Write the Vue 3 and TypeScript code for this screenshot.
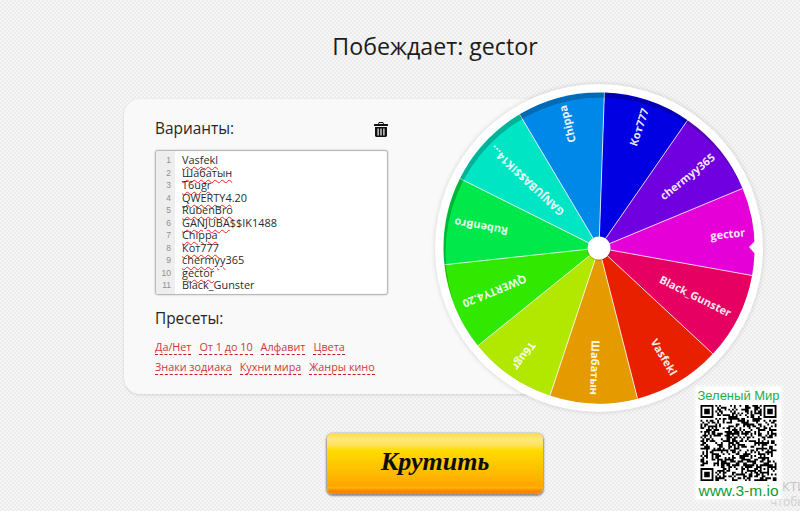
<script setup lang="ts">
const cx = 170
const cy = 170
const R = 155.5
const names = ['Кот777','chermyy365','gector','Black_Gunster','Vasfekl','Шабатын','T6ugr','QWERTY4.20','RubenBro','GANJUBA$$IK14...','Chippa']
const colors = ['#0000e2','#7000e0','#e600d8','#e60062','#e82000','#e59a00','#b2e800','#30e800','#00e84a','#00e5c4','#0088e8']
const step = 360 / 11
const start = 2
function pt(a: number, r: number) {
  const t = (a - 90) * Math.PI / 180
  return [cx + r * Math.cos(t), cy + r * Math.sin(t)]
}
const segments = names.map((name, i) => {
  const a0 = start + i * step
  const a1 = a0 + step
  const p0 = pt(a0, R)
  const p1 = pt(a1, R)
  return {
    name,
    color: colors[i],
    d: `M${cx} ${cy}L${p0[0].toFixed(2)} ${p0[1].toFixed(2)}A${R} ${R} 0 0 1 ${p1[0].toFixed(2)} ${p1[1].toFixed(2)}Z`,
    line: p0,
    rot: `rotate(${(a0 + step / 2 - 90).toFixed(2)} ${cx} ${cy})`
  }
})
const lines = ['Vasfekl','Шабатын','T6ugr','QWERTY4.20','RubenBro','GANJUBA$$IK1488','Chippa','Кот777','chermyy365','gector','Black_Gunster']
const marks: Record<string, [string, string]> = {
  'QWERTY4.20': ['QWERTY4', '.20'],
  'GANJUBA$$IK1488': ['GANJUBA', '$$IK1488'],
  'Кот777': ['Кот777', ''],
  'chermyy365': ['chermyy', '365'],
  'Black_Gunster': ['', 'Black_Gunster']
}
const rows = lines.map((t) => {
  const m = marks[t]
  return m ? { wavy: m[0], plain: m[1] } : { wavy: t, plain: '' }
})
const presets = [['Да/Нет','От 1 до 10','Алфавит','Цвета'],['Знаки зодиака','Кухни мира','Жанры кино']]

const N = 41
function qrPath() {
  let seed = 20231
  const rnd = () => { seed = (seed * 1103515245 + 12345) & 0x7fffffff; return (seed >> 16) & 1 }
  const g: number[][] = []
  for (let y = 0; y < N; y++) { g.push([]); for (let x = 0; x < N; x++) g[y].push(rnd()) }
  const finder = (ox: number, oy: number, size: number) => {
    for (let y = -1; y <= size; y++) for (let x = -1; x <= size; x++) {
      if (oy + y < 0 || ox + x < 0 || oy + y >= N || ox + x >= N) continue
      const inside = x >= 0 && y >= 0 && x < size && y < size
      const ring = x === 0 || y === 0 || x === size - 1 || y === size - 1
      const core = x >= 2 && y >= 2 && x < size - 2 && y < size - 2
      g[oy + y][ox + x] = inside && (ring || core) ? 1 : 0
    }
  }
  finder(0, 0, 7); finder(N - 7, 0, 7); finder(0, N - 7, 7)
  for (let y = 0; y < 5; y++) for (let x = 0; x < 5; x++) {
    g[N - 9 + y][N - 9 + x] = (x === 0 || y === 0 || x === 4 || y === 4 || (x === 2 && y === 2)) ? 1 : 0
  }
  let d = ''
  g.forEach((r, y) => r.forEach((v, x) => { if (v) d += `M${x} ${y}h1v1h-1z` }))
  return d
}
const qr = qrPath()
</script>

<template>
  <div class="page">
    <div class="column">
      <h1 class="title">Побеждает: gector</h1>
      <section class="card">
        <div class="head">
          <h2 class="label">Варианты:</h2>
          <svg class="trash" viewBox="0 0 14 15" width="14" height="15" aria-hidden="true">
            <path fill="#111" fill-rule="evenodd" d="M5 0h4l1 2h3.400a.6.6 0 0 1 .6.6V4H0V2.600A.6.6 0 0 1 .6 2H4zM5.400 1 5 2h4l-.4-1zM1 5h12v8.600c0 .8-.6 1.400-1.400 1.400H2.400C1.600 15 1 14.400 1 13.600zM3.500 6.500v7h1.200v-7zM6.400 6.500v7h1.200v-7zM9.300 6.500v7h1.200v-7z"/>
          </svg>
        </div>
        <div class="editor">
          <div class="gutter">
            <div v-for="(r, i) in rows" :key="i" class="num">{{ i + 1 }}</div>
          </div>
          <div class="code">
            <div v-for="(r, i) in rows" :key="i" class="line"><span class="wavy">{{ r.wavy }}</span>{{ r.plain }}</div>
          </div>
        </div>
        <h2 class="label presets-label">Пресеты:</h2>
        <div v-for="(row, i) in presets" :key="i" class="preset-row">
          <a v-for="p in row" :key="p" class="preset">{{ p }}</a>
        </div>
      </section>
      <button class="spin">Крутить</button>
    </div>

    <svg class="wheel" width="340" height="340" viewBox="0 0 340 340">
      <defs>
        <clipPath id="disc"><circle :cx="cx" :cy="cy" :r="R" /></clipPath>
        <filter id="soft" x="-10%" y="-10%" width="120%" height="120%"><feGaussianBlur stdDeviation="2" /></filter>
      </defs>
      <circle :cx="cx" :cy="cy" r="165" fill="#000" opacity="0.1" filter="url(#soft)" />
      <circle :cx="cx" :cy="cy" r="164" fill="#fff" />
      <path v-for="s in segments" :key="s.name" :d="s.d" :fill="s.color" />
      <g stroke="#fff" stroke-opacity="0.75" stroke-width="1">
        <line v-for="s in segments" :key="s.name" :x1="cx" :y1="cy" :x2="s.line[0]" :y2="s.line[1]" />
      </g>
      <g clip-path="url(#disc)">
        <path fill="#000" fill-opacity="0.22" fill-rule="evenodd" :d="`M${cx - R} ${cy}a${R} ${R} 0 1 0 ${2 * R} 0a${R} ${R} 0 1 0 ${-2 * R} 0ZM${cx - R + 2} ${cy + 5}a${R} ${R} 0 1 0 ${2 * R} 0a${R} ${R} 0 1 0 ${-2 * R} 0Z`" />
      </g>
      <text v-for="s in segments" :key="s.name" class="slice-text" :x="cx + 147" :y="cy + 4" text-anchor="end" :transform="s.rot">{{ s.name }}</text>
      <circle :cx="cx" :cy="cy + 0.5" r="12" fill="#000" opacity="0.25" />
      <circle :cx="cx" :cy="cy" r="11.5" fill="#fff" />
      <path fill="#fff" d="M320 169 326 163V176Z" />
    </svg>

    <div class="behind">
      <div class="behind-a">КТИ</div>
      <div class="behind-b">чтобы</div>
    </div>
    <aside class="ad">
      <div class="ad-top">Зеленый Мир</div>
      <svg class="qr" :viewBox="`0 0 ${N} ${N}`" width="77" height="76"><path :d="qr" fill="#000" /></svg>
      <div class="ad-bottom">www.3-m.io</div>
    </aside>
  </div>
</template>

<style scoped>
.page {
  position: relative;
  width: 800px;
  height: 511px;
  overflow: hidden;
  box-sizing: border-box;
  padding-left: 124px;
  background-color: #ececec;
  background-image:
    radial-gradient(circle at 1px 1px, rgba(255,255,255,.55) 0 1px, transparent 1.2px),
    radial-gradient(circle at 3px 3px, rgba(255,255,255,.55) 0 1px, transparent 1.2px);
  background-size: 4px 4px;
  font-family: "Open Sans", sans-serif;
  color: #222;
}
.column {
  width: 622px;
  display: flex;
  flex-direction: column;
  align-items: center;
}
.title {
  margin: 30px 0 0;
  height: 69px;
  font-size: 23.2px;
  line-height: 33px;
  font-weight: 400;
  color: #1c1c1c;
}
.card {
  align-self: flex-start;
  box-sizing: border-box;
  width: 480px;
  height: 295px;
  padding: 20px 0 0 31px;
  background: #f9f9f9;
  border-radius: 16px;
  box-shadow: 0 1px 3px rgba(0,0,0,.12);
}
.head {
  width: 233px;
  height: 31px;
  display: flex;
  justify-content: space-between;
  align-items: flex-start;
}
.label {
  margin: 0;
  font-size: 15.4px;
  line-height: 20px;
  font-weight: 400;
  color: #262626;
}
.trash { margin: 3px 0 0 0; }
.editor {
  box-sizing: border-box;
  width: 233px;
  height: 145px;
  display: flex;
  background: #fff;
  border: 1px solid #b9b9b9;
  border-radius: 3px;
  box-shadow: 0 0 2px rgba(0,0,0,.25), inset 0 0 1px rgba(0,0,0,.2);
  padding-top: 3px;
  overflow: hidden;
}
.gutter {
  width: 19px;
  box-sizing: border-box;
  margin-top: -3px;
  padding: 3px 4px 0 0;
  background: #eeeeee;
  flex: none;
}
.num {
  height: 12.5px;
  text-align: right;
  font: 8.5px/12.5px "Liberation Sans", sans-serif;
  color: #8f8f8f;
}
.code {
  padding-left: 7px;
  font-size: 10.9px;
}
.line {
  height: 12.5px;
  line-height: 12.5px;
  white-space: nowrap;
  color: #2b2b2b;
}
.wavy {
  text-decoration: underline wavy #f62020 1px;
  text-underline-offset: 2px;
}
.presets-label {
  margin-top: 14px;
  margin-bottom: 10px;
}
.preset-row {
  display: flex;
  gap: 8px;
  height: 20px;
}
.preset {
  font-size: 10.8px;
  line-height: 15px;
  height: 15px;
  color: #c83a3a;
  border-bottom: 1px dashed #c42020;
}
.spin {
  margin-top: 39px;
  width: 216px;
  height: 61px;
  border: 0;
  border-radius: 6px;
  padding: 0 0 4px;
  background: linear-gradient(#ffd94a 0, #ffe87c 10%, #ffe35a 20%, #ffdc00 28%, #ffbe00 62%, #ffa600 87%, #ffb400 89%, #ffa000 92%, #ff8000 95%, #ff8800 100%);
  box-shadow: 0 1px 2px 1px rgba(0,0,0,.42);
  font-family: "Liberation Serif", serif;
  font-style: italic;
  font-weight: 700;
  font-size: 26px;
  color: #0d0d0d;
}
.wheel {
  position: absolute;
  left: 428.5px;
  top: 78px;
}
.slice-text {
  font-family: "Open Sans", sans-serif;
  font-weight: 700;
  font-size: 11px;
  fill: #fff;
  fill-opacity: .92;
}
.behind {
  position: absolute;
  left: 770px;
  top: 477px;
  color: #c4c4c4;
  white-space: nowrap;
}
.behind-a { font-size: 13px; line-height: 18px; padding-left: 12px; }
.behind-b { font-size: 12px; line-height: 14px; color: #cfcfcf; }
.ad {
  position: absolute;
  left: 696px;
  top: 387px;
  width: 85px;
  height: 112px;
  background: #fff;
  box-shadow: 0 0 3px 1px rgba(255,255,255,.8);
  display: flex;
  flex-direction: column;
  align-items: center;
  font-family: "Liberation Sans", sans-serif;
  font-size: 13px;
  color: #22ae45;
  white-space: nowrap;
}
.ad-top { line-height: 17px; height: 21px; }
.qr { flex: none; }
.ad-bottom { line-height: 17px; margin-top: 1px; font-size: 15.5px; color: #109c30; }
</style>

<style>
html, body { margin: 0; background: #ececec; }
</style>
